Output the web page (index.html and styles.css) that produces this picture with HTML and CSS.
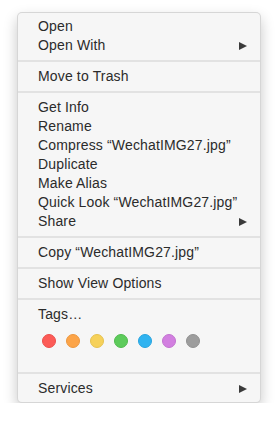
FILE: index.html
```html
<!DOCTYPE html>
<html>
<head>
<meta charset="utf-8">
<link rel="stylesheet" href="styles.css">
</head>
<body>
<div class="menu">
  <div class="item">Open</div>
  <div class="item sub">Open With<span class="arrow"></span></div>
  <div class="sep"></div>
  <div class="item">Move to Trash</div>
  <div class="sep"></div>
  <div class="item">Get Info</div>
  <div class="item">Rename</div>
  <div class="item">Compress “WechatIMG27.jpg”</div>
  <div class="item">Duplicate</div>
  <div class="item">Make Alias</div>
  <div class="item">Quick Look “WechatIMG27.jpg”</div>
  <div class="item sub">Share<span class="arrow"></span></div>
  <div class="sep"></div>
  <div class="item">Copy “WechatIMG27.jpg”</div>
  <div class="sep"></div>
  <div class="item">Show View Options</div>
  <div class="sep"></div>
  <div class="item">Tags…</div>
  <div class="tags">
    <span class="dot red"></span>
    <span class="dot orange"></span>
    <span class="dot yellow"></span>
    <span class="dot green"></span>
    <span class="dot blue"></span>
    <span class="dot purple"></span>
    <span class="dot gray"></span>
  </div>
  <div class="sep"></div>
  <div class="item sub">Services<span class="arrow"></span></div>
</div>
</body>
</html>
```
FILE: styles.css
```css
html, body {
  margin: 0;
  padding: 0;
  background: #ffffff;
}
body {
  padding: 12px 16px 0 17px;
}
.menu {
  width: 242px;
  background: #f6f6f6;
  border: 1px solid rgba(0, 0, 0, 0.13);
  border-radius: 5px;
  box-shadow: 0 6px 14px rgba(0, 0, 0, 0.22);
  padding: 4px 0 4px 0;
  font-family: "Liberation Sans", Arial, sans-serif;
  font-size: 14px;
  letter-spacing: 0.15px;
  color: #2b2b2b;
}
.item {
  height: 19px;
  line-height: 19px;
  padding-left: 20px;
  padding-right: 13px;
  display: flex;
  justify-content: space-between;
  align-items: center;
  white-space: nowrap;
}
.arrow {
  width: 0;
  height: 0;
  border-top: 4.5px solid transparent;
  border-bottom: 4.5px solid transparent;
  border-left: 8px solid #3a3a3a;
}
.sep {
  height: 2px;
  background: #e2e2e2;
  margin: 5px 0;
}
.tags {
  display: flex;
  gap: 10px;
  padding: 10px 0 19px 24px;
}
.dot {
  width: 14px;
  height: 14px;
  border-radius: 50%;
  box-sizing: border-box;
}
.red { background: #fc5b57; border: 1px solid #ec4f4b; }
.orange { background: #fca448; border: 1px solid #ec973f; }
.yellow { background: #f6d15a; border: 1px solid #e6c24f; }
.green { background: #5dcb5b; border: 1px solid #50bb4e; }
.blue { background: #30b3f0; border: 1px solid #27a4df; }
.purple { background: #d27fe0; border: 1px solid #c273d0; }
.gray { background: #9d9d9d; border: 1px solid #919191; }
```
